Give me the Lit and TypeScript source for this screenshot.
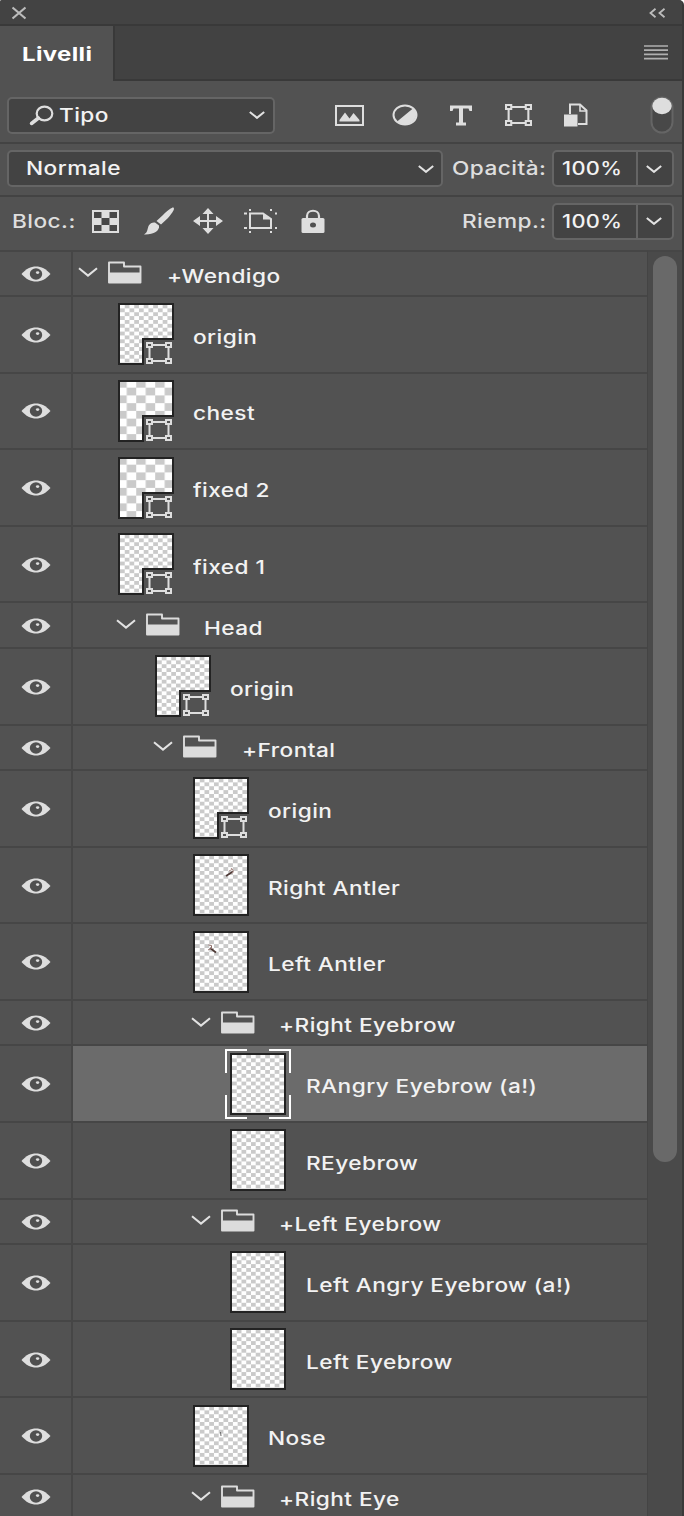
import { LitElement, html, svg, css } from "lit";
import { customElement } from "lit/decorators.js";

interface Layer { name: string; kind: "folder" | "layer"; depth: number; shape?: boolean; cell?: number; selected?: boolean; mark?: string; }

const L = (name: string, depth: number, o: Partial<Layer> = {}): Layer => ({ name, depth, kind: "layer", ...o });
const F = (name: string, depth: number): Layer => ({ name, depth, kind: "folder" });

const LAYERS: Layer[] = [
  F("+Wendigo", 0),
  L("origin", 1, { shape: true }),
  L("chest", 1, { shape: true, cell: 2 }),
  L("fixed 2", 1, { shape: true, cell: 2 }),
  L("fixed 1", 1, { shape: true }),
  F("Head", 1),
  L("origin", 2, { shape: true }),
  F("+Frontal", 2),
  L("origin", 3, { shape: true }),
  L("Right Antler", 3, { mark: "right" }),
  L("Left Antler", 3, { mark: "left" }),
  F("+Right Eyebrow", 3),
  L("RAngry Eyebrow (a!)", 4, { selected: true }),
  L("REyebrow", 4),
  F("+Left Eyebrow", 3),
  L("Left Angry Eyebrow (a!)", 4),
  L("Left Eyebrow", 4),
  L("Nose", 3, { mark: "nose" }),
  F("+Right Eye", 3),
];

const chevron = (w: number, h: number) => html`<svg width=${w} height=${h} viewBox="0 0 20 10" preserveAspectRatio="none">
  <path d="M1 1.2 10 8.6 19 1.2" fill="none" stroke="#e2e2e2" stroke-width="2" vector-effect="non-scaling-stroke"/></svg>`;

const eye = html`<svg width="30" height="16" viewBox="0 0 30 16">
  <path d="M.5 8C5 2.8 9.700 .5 15 .5S25 2.800 29.500 8C25 13.200 20.300 15.500 15 15.500S5 13.200 .5 8Z" fill="#dedede"/>
  <ellipse cx="15" cy="8" rx="6.200" ry="5.800" fill="#505050"/><ellipse cx="16.600" cy="6.600" rx="1.700" ry="1.400" fill="#dedede"/></svg>`;

const folder = html`<svg width="34" height="23" viewBox="0 0 34 23">
  <path d="M1 21.500V1.500H16V5.500H32.500V21.500Z" fill="none" stroke="#dcdcdc" stroke-width="1.900" stroke-linejoin="round"/>
  <path d="M1 11.500H33V22H1Z" fill="#dcdcdc"/></svg>`;

const shapeGlyph = (w: number, h: number) => html`<svg width=${w} height=${h} viewBox="0 0 26 22" preserveAspectRatio="none">
  <g fill="none" stroke="#dedede" stroke-width="2">
    <path d="M6 3H20M6 19H20M3.500 5V17M22.500 5V17"/>
    <path d="M1 1H6V5H1ZM20 1H25V5H20ZM1 17H6V21H1ZM20 17H25V21H20Z"/></g></svg>`;

const marks: Record<string, unknown> = {
  right: svg`<path d="M33 22 40 17.500" stroke="#4c3733" stroke-width="1.600"/><path d="M38 14 40.500 17 39 19.500M36 17 40 15" fill="none" stroke="#a98d89" stroke-width="1"/>`,
  left: svg`<path d="M23 21.500 17 17" stroke="#4c3733" stroke-width="1.600"/><path d="M18.500 18V14.500L15.500 14M15 19 18 17.500" fill="none" stroke="#8d6d68" stroke-width="1"/>`,
  nose: svg`<path d="M27.500 27 28 31" stroke="#6a6a6a" stroke-width="1"/>`,
};

const thumb = (l: Layer) => {
  const s = l.cell ?? 1, w = 4.74 * s, h = 3.87 * s, id = `c${s}`;
  const outline = l.shape ? "M1 1H55V36H25V61H1Z" : "M1 1H55V61H1Z";
  return html`<svg width="56" height="62" viewBox="0 0 56 62">
    <defs><pattern id=${id} x=${s === 1 ? 2 : -.75} y=${s === 1 ? 1.500 : -7.800} width=${w * 2} height=${h * 2} patternUnits="userSpaceOnUse">
      <rect width=${w * 2} height=${h * 2} fill="#fff"/>
      <rect x=${w} width=${w} height=${h} fill="#cacaca"/><rect y=${h} width=${w} height=${h} fill="#cacaca"/></pattern></defs>
    <path d=${outline} fill="url(#${id})" stroke="#232323" stroke-width="2"/>
    ${l.mark ? marks[l.mark] : null}</svg>`;
};

@customElement("layer-row")
export class LayerRow extends LitElement {
  static properties = { layer: { attribute: false } };
  declare layer: Layer;
  static styles = css`
    :host { display: flex; flex: none; box-sizing: border-box; border-top: 2px solid #464646; background: #525252; }
    svg { display: block; flex: none; }
    .eye { flex: none; box-sizing: border-box; border-right: 2px solid #464646; display: flex; align-items: center; padding-left: 21px; padding-top: 1px; width: 73px; }
    .body { flex: 1; display: flex; align-items: center; }
    .selected { background: #6b6b6b; }
    .thumb { position: relative; display: flex; }
    .badge { position: absolute; left: 28px; top: 39px; }
    .frame { position: absolute; left: -5px; top: -4px; }
    .name { font: 500 18.500px/24px Inter, sans-serif; color: #f2f2f2; white-space: nowrap; transform: scaleX(1.225); transform-origin: 0 50%; letter-spacing: .35px; }
    .chev { padding-bottom: 2px; }
    .folder { margin-left: 10px; padding-bottom: 1px; }
    .folder-name { margin-left: 24.500px; padding-top: 5px; }
    .layer-name { margin-left: 19.200px; padding-top: 5px; }
  `;
  render() {
    const l = this.layer;
    const indent = l.kind === "folder" ? 5 + l.depth * 37.6 : 7.05 + l.depth * 37.6;
    return html`<div class="eye">${eye}</div>
      <div class="body ${l.selected ? "selected" : ""}" style="padding-left:${indent}px">
        ${l.kind === "folder"
          ? html`<div class="chev">${chevron(20, 10)}</div><div class="folder">${folder}</div><div class="name folder-name">${l.name}</div>`
          : html`<div class="thumb">${thumb(l)}
              ${l.shape ? html`<div class="badge">${shapeGlyph(26, 22)}</div>` : null}
              ${l.selected ? html`<svg class="frame" width="66" height="70" viewBox="0 0 66 70"><path d="M1 24V1H22M44 1H65V24M65 46V69H44M22 69H1V46" fill="none" stroke="#fff" stroke-width="2"/></svg>` : null}
            </div><div class="name layer-name">${l.name}</div>`}
      </div>`;
  }
}

@customElement("app-root")
export class AppRoot extends LitElement {
  static styles = css`
    :host { display: flex; flex-direction: column; box-sizing: border-box; width: 684px; height: 1516px; overflow: hidden; background: #525252; border-right: 2px solid #393939; border-radius: 2px 5px 0 0; font: 500 18.500px/24px Inter, sans-serif; color: #f2f2f2; }
    svg { display: block; flex: none; }
    .top { height: 26px; box-sizing: border-box; flex: none; background: #434343; border-bottom: 2px solid #393939; display: flex; justify-content: space-between; padding: 2px 16px 0 11px; align-items: center; }
    .tabs { height: 55px; flex: none; display: flex; }
    .tab { width: 112.500px; font-weight: 700; font-size: 19px; padding: 17px 0 0 22px; box-sizing: border-box; color: #fff; }
    .tab .t { transform: scaleX(1.26); letter-spacing: .3px; }
    .tabrest { flex: 1; background: #424242; border-left: 2px solid #393939; border-bottom: 2px solid #393939; box-sizing: border-box; display: flex; justify-content: flex-end; padding: 19px 14px 0 0; }
    .t { display: inline-block; white-space: nowrap; transform: scaleX(1.225); transform-origin: 0 50%; letter-spacing: .35px; }
    .bar { flex: none; box-sizing: border-box; display: flex; align-items: center; padding: 0 8px 0 7px; }
    .filter { height: 61px; padding-top: 7px; }
    .line { border-top: 2px solid #434343; }
    .box { box-sizing: border-box; height: 37px; border: 2px solid #656565; border-radius: 5px; background: #434343; display: flex; align-items: center; }
    .kind { width: 268px; padding: 0 8px 0 20px; }
    .grow { flex: 1; }
    .kind .t { margin-left: 5px; }
    .icons { display: flex; align-items: center; margin-left: 59.500px; }
    .image { margin-right: 28px; }
    .adjust { margin-right: 31.500px; }
    .type { margin-right: 32px; }
    .smart { margin-left: 31px; }
    .toggle { margin-left: auto; }
    .mode { width: 437px; padding: 0 7px 0 17px; }
    .mode .t { margin-top: -1px; }
    .lab { color: #dedede; padding-bottom: 1px; }
    .opl { margin-left: 9px; width: 100px; }
    .num { width: 122px; }
    .val { width: 84px; height: 33px; box-sizing: border-box; padding: 4px 0 0 8px; border-right: 2px solid #656565; }
    .val .t { transform: scaleX(1.18); letter-spacing: .3px; }
    .arrow { padding-left: 8px; }
    .main { flex: 1; min-height: 0; display: flex; background: #4a4a4a; }
    .list { width: 647px; display: flex; flex-direction: column; overflow: hidden; }
    .track { flex: 1; border-left: 1px solid #444; border-top: 2px solid #464646; padding: 4px 0 0 5px; }
    .handle { width: 24px; height: 906.500px; border-radius: 12px; background: #696969; }
    .locks { display: flex; align-items: center; }
    .brush { margin-left: 24px; }
    .move { margin-left: 18px; }
    .artboard { margin-left: 21px; }
    .lock { margin-left: 23px; }
    .bloc { width: 80px; margin-left: 5px; }
    .rl { margin-left: auto; width: 90px; }
    .opacity-row { height: 53px; padding-bottom: 2px; }
    .lock-row { height: 54.500px; padding-bottom: 4px; }
    .layer { height: 76.600px; }
    .folder { height: 45.550px; }
  `;
  render() {
    const c = "#dedede";
    const num = html`<div class="box num"><div class="val"><span class="t">100%</span></div><div class="arrow">${chevron(16, 8)}</div></div>`;
    return html`
      <div class="top">
        <svg width="16" height="14" viewBox="0 0 16 14"><path d="M1.500 1.500 14.500 12.500M14.500 1.500 1.500 12.500" stroke="#bcbcbc" stroke-width="2.200"/></svg>
        <svg width="17" height="10" viewBox="0 0 17 10"><path d="M6.500 .8 1.500 5 6.500 9.200M15.500 .8 10.500 5 15.500 9.200" fill="none" stroke="#bcbcbc" stroke-width="1.800"/></svg>
      </div>
      <div class="tabs"><div class="tab"><span class="t">Livelli</span></div>
        <div class="tabrest"><svg width="24" height="15" viewBox="0 0 24 15"><path d="M0 1H24M0 5.200H24M0 9.400H24M0 13.600H24" stroke="#b0b0b0" stroke-width="1.700"/></svg></div></div>
      <div class="bar filter">
        <div class="box kind">
          <svg width="25" height="21" viewBox="0 0 25 21"><ellipse cx="15.500" cy="8.500" rx="7.800" ry="6.800" fill="none" stroke=${c} stroke-width="2.200"/><path d="M9.500 13 2.500 18.500" stroke=${c} stroke-width="3.500" stroke-linecap="round"/></svg>
          <span class="t">Tipo</span><span class="grow"></span>${chevron(16, 8)}
        </div>
        <div class="icons">
          <svg class="image" width="29" height="21" viewBox="0 0 29 21"><path d="M1 1H28V20H1Z" fill="none" stroke=${c} stroke-width="2"/><path d="M4.500 16.500V15L10 7.500 14.500 13.500 18.500 8 24.500 15V16.500Z" fill=${c}/></svg>
          <svg class="adjust" width="26" height="22" viewBox="0 0 26 22"><ellipse cx="13" cy="11" rx="11.500" ry="9.600" fill="none" stroke=${c} stroke-width="2"/><path d="M21.500 4A12 10 0 0 1 4.500 18Z" fill=${c}/></svg>
          <svg class="type" width="24" height="21" viewBox="0 0 24 21"><path d="M1 .5H23V6H20.500L19.500 3.500H14V17.500H17V20.500H7V17.500H10V3.500H4.500L3.500 6H1Z" fill=${c}/></svg>
          ${shapeGlyph(27, 22)}
          <svg class="smart" width="26" height="24" viewBox="0 0 26 24"><path d="M7 11V1.500H17L23.500 7.500V21H15" fill="none" stroke=${c} stroke-width="2"/><path d="M17 1.500V8H23.500" fill="none" stroke=${c} stroke-width="1.600"/><path d="M1 11.500H14.500V23.500H1Z" fill=${c}/></svg>
        </div>
        <svg class="toggle" width="24" height="38" viewBox="0 0 24 38"><rect x="1.500" y="1.500" width="21" height="35" rx="10.500" fill="#484848" stroke="#656565" stroke-width="2"/><ellipse cx="12" cy="10" rx="9.700" ry="8.300" fill="#dedede"/></svg>
      </div>
      <div class="bar line opacity-row">
        <div class="box mode"><span class="t">Normale</span><span class="grow"></span>${chevron(16, 8)}</div>
        <div class="opl lab"><span class="t">Opacità:</span></div>${num}
      </div>
      <div class="bar line lock-row">
        <div class="bloc lab"><span class="t">Bloc.:</span></div>
        <div class="locks">
          <svg width="27" height="23" viewBox="0 0 27 23"><path d="M1 1H26V22H1Z" fill="#484848" stroke=${c} stroke-width="2"/><path d="M9.500 2H17.500V8H9.500ZM2 8H9.500V15H2ZM17.500 8H25V15H17.500ZM9.500 15H17.500V21H9.500Z" fill=${c}/></svg>
          <svg class="brush" width="32" height="28" viewBox="0 0 32 28"><path d="M30.500 .5C32 2 30 5 25 11L18 17.500 13.500 14 20 8C26 2 29 .2 30.500 .5ZM12 15.500 16 18.500C17 24 10 28 1 27.500C5 25 4 23 5.500 19C7 16 10 15 12 15.500Z" fill=${c}/></svg>
          <svg class="move" width="30" height="26" viewBox="0 0 30 26"><path d="M15 4V22M4 13H26" stroke=${c} stroke-width="2"/><path d="M15 0 20.500 6H9.500ZM15 26 20.500 20H9.500ZM0 13 7 8V18ZM30 13 23 8V18Z" fill=${c}/></svg>
          <svg class="artboard" width="34" height="24" viewBox="0 0 34 24"><path d="M6 4.500H19L27 10V19H6Z" fill="none" stroke=${c} stroke-width="2"/><path d="M19 4.500V10.500H27Z" fill=${c}/><path d="M6 0V2M27 0V2M6 22V24M27 22V24M0 4.500H3M31 4.500H33M0 19H3M31 19H33" stroke=${c} stroke-width="2"/></svg>
          <svg class="lock" width="24" height="25" viewBox="0 0 24 25"><path d="M6 11V7C6 0 18 0 18 7V11" fill="none" stroke=${c} stroke-width="2.200"/><rect x=".5" y="9" width="23" height="15" rx="1.500" fill=${c}/><ellipse cx="12" cy="16" rx="3" ry="2.500" fill="#505050"/></svg>
        </div>
        <div class="rl lab"><span class="t">Riemp.:</span></div>${num}
      </div>
      <div class="main"><div class="list">${LAYERS.map((l) => html`<layer-row class=${l.kind} .layer=${l}></layer-row>`)}</div>
        <div class="track"><div class="handle"></div></div></div>`;
  }
}
